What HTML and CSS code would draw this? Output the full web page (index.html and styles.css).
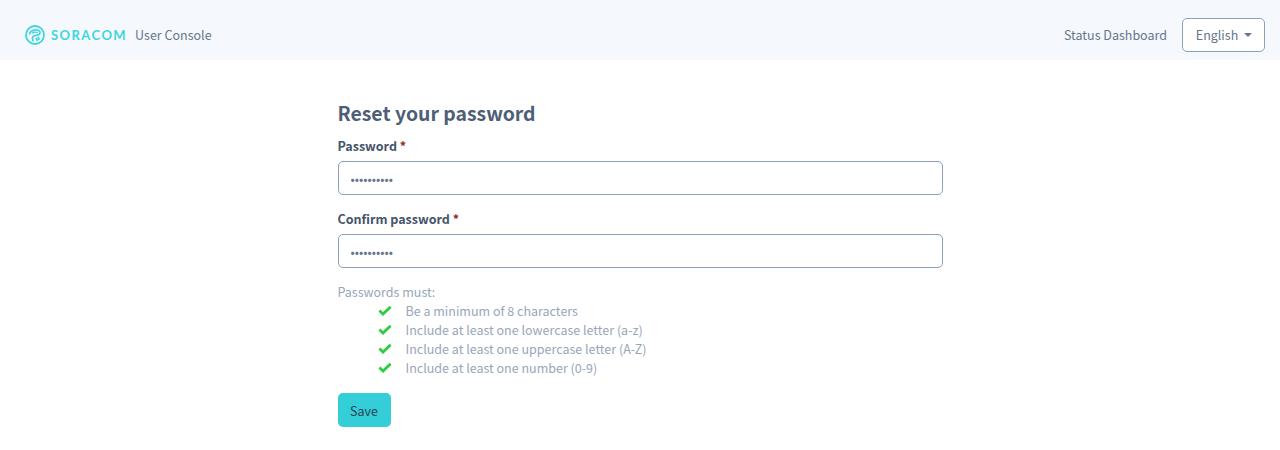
FILE: index.html
```html
<!DOCTYPE html>
<html lang="en">
<head>
<meta charset="utf-8">
<title>Reset your password</title>
<link rel="stylesheet" href="styles.css">
</head>
<body>
<header class="topbar">
  <div class="brand">
    <svg class="logo-mark" width="20" height="20" viewBox="0 0 20 20" fill="none" aria-hidden="true">
      <circle cx="10" cy="10" r="9" stroke="#3fd5df" stroke-width="1.8"/>
      <path d="M4.5 8.5C6 5.5 10 4.3 13 5.2c2.2.7 2.8 3.2 1 4.3-1.7 1-4.4.6-5.8 1.9-1 .9-.9 2.5-.2 4.2" stroke="#3fd5df" stroke-width="1.7" stroke-linecap="round"/>
      <path d="M7.5 7.9c1.7-.8 3.6-.9 4.8-.4M11 13.5l2.5-1.2.8 1.7-2.2 1.4z" stroke="#3fd5df" stroke-width="1.3" stroke-linecap="round"/>
    </svg>
    <span class="logo-text">SORACOM</span>
    <span class="console-name">User Console</span>
  </div>
  <nav class="topnav">
    <a class="status-link" href="#">Status Dashboard</a>
    <button class="lang-button" type="button"><span class="lang-text">English</span><span class="caret"></span></button>
  </nav>
</header>
<main class="content">
  <h1 class="title">Reset your password</h1>
  <form class="form">
    <div class="field">
      <label class="label" for="pw">Password <span class="req">*</span></label>
      <input class="input" id="pw" type="password" value="abcdefghij">
    </div>
    <div class="field">
      <label class="label" for="cpw">Confirm password <span class="req">*</span></label>
      <input class="input" id="cpw" type="password" value="abcdefghij">
    </div>
    <div class="rules">
      <div class="rules-head">Passwords must:</div>
      <ul class="rule-list">
        <li class="rule"><svg class="check" viewBox="0 0 14 11" aria-hidden="true"><path d="M1.4 5.6 5 9 12.6 1.7" /></svg>Be a minimum of 8 characters</li>
        <li class="rule"><svg class="check" viewBox="0 0 14 11" aria-hidden="true"><path d="M1.4 5.6 5 9 12.6 1.7" /></svg>Include at least one lowercase letter (a-z)</li>
        <li class="rule"><svg class="check" viewBox="0 0 14 11" aria-hidden="true"><path d="M1.4 5.6 5 9 12.6 1.7" /></svg>Include at least one uppercase letter (A-Z)</li>
        <li class="rule"><svg class="check" viewBox="0 0 14 11" aria-hidden="true"><path d="M1.4 5.6 5 9 12.6 1.7" /></svg>Include at least one number (0-9)</li>
      </ul>
    </div>
    <button class="save" type="button">Save</button>
  </form>
</main>
</body>
</html>
```
FILE: styles.css
```css
* { box-sizing: border-box; }
html, body { margin: 0; padding: 0; }
body {
  background: #fff;
  color: #4a5a70;
  font-family: "Noto Sans CJK JP", "Liberation Sans", sans-serif;
  font-size: 12.5px;
  line-height: 19px;
}
.topbar {
  height: 60px;
  background: #f5f9fd;
  display: flex;
  align-items: center;
  justify-content: space-between;
  padding: 10px 15px 0 25px;
}
.brand { display: flex; align-items: center; }
.logo-mark { display: block; }
.logo-text {
  margin-left: 6px;
  color: #3fd5df;
  font-family: "Lato", sans-serif;
  font-weight: 700;
  font-size: 13px;
  letter-spacing: 1.45px;
}
.console-name { margin: 0 0 2px 8px; color: #66768c; }
.topnav { display: flex; align-items: center; gap: 15px; }
.status-link { margin-bottom: 2px; color: #66768c; text-decoration: none; }
.lang-button {
  height: 34px;
  width: 83px;
  padding: 0 0 0 1px;
  background: #fff;
  border: 1px solid #8aa2bd;
  border-radius: 5px;
  color: #66768c;
  font: inherit;
  display: flex;
  align-items: center;
  justify-content: center;
}
.lang-text { margin-bottom: 2px; }
.caret {
  margin-left: 6px;
  border-top: 4px solid #66768c;
  border-left: 4px solid transparent;
  border-right: 4px solid transparent;
}
.content { width: 605px; margin: 0 auto; padding-top: 40px; }
.title {
  margin: 0 0 10px;
  font-size: 19.4px;
  line-height: 26px;
  font-weight: 700;
  color: #4d5e76;
}
.field { margin-bottom: 14px; }
.label {
  display: block;
  margin-bottom: 6px;
  font-weight: 700;
  color: #44546a;
}
.req { color: #8f2b2b; }
.input {
  display: block;
  width: 100%;
  height: 34px;
  padding: 0 12px;
  border: 1px solid #8aa2bd;
  border-radius: 5px;
  background: #fff;
  color: #66768c;
  font: inherit;
}
.rules { margin-top: 14px; color: #98a6ba; }
.rule-list { list-style: none; margin: 0; padding: 0 0 0 40px; }
.rule { display: flex; align-items: center; }
.check {
  width: 14px;
  height: 11px;
  margin-right: 14px;
  flex: none;
}
.check path { fill: none; stroke: #2ecc40; stroke-width: 2.8; }
.save {
  display: block;
  margin-top: 16px;
  width: 53px;
  height: 34px;
  padding: 0;
  border: 0;
  border-radius: 5px;
  background: #33ced8;
  color: #2c4252;
  font: inherit;
}
```
